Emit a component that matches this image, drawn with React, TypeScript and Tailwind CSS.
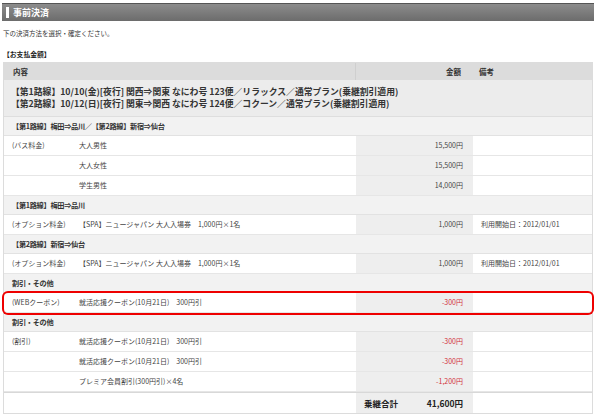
import React from "react";

const FONT = { fontFamily: '"Noto Sans CJK JP", "Noto Sans", sans-serif' };

type Row =
  | { kind: "section"; label: string }
  | { kind: "item"; cat?: string; name: string; price: string; red?: boolean; note?: string; mark?: boolean };

const ROWS: Row[] = [
  { kind: "section", label: "【第1路線】梅田⇒品川／【第2路線】新宿⇒仙台" },
  { kind: "item", cat: "(バス料金)", name: "大人男性", price: "15,500円" },
  { kind: "item", name: "大人女性", price: "15,500円" },
  { kind: "item", name: "学生男性", price: "14,000円" },
  { kind: "section", label: "【第1路線】梅田⇒品川" },
  { kind: "item", cat: "(オプション料金)", name: "【SPA】ニュージャパン 大人入場券　1,000円×1名", price: "1,000円", note: "利用開始日：2012/01/01" },
  { kind: "section", label: "【第2路線】新宿⇒仙台" },
  { kind: "item", cat: "(オプション料金)", name: "【SPA】ニュージャパン 大人入場券　1,000円×1名", price: "1,000円", note: "利用開始日：2012/01/01" },
  { kind: "section", label: "割引・その他" },
  { kind: "item", cat: "(WEBクーポン)", name: "就活応援クーポン(10月21日)　300円引", price: "-300円", red: true, mark: true },
  { kind: "section", label: "割引・その他" },
  { kind: "item", cat: "(割引)", name: "就活応援クーポン(10月21日)　300円引", price: "-300円", red: true },
  { kind: "item", name: "就活応援クーポン(10月21日)　300円引", price: "-300円", red: true },
  { kind: "item", name: "プレミア会員割引(300円引)×4名", price: "-1,200円", red: true },
];

function SectionRow({ label }: { label: string }) {
  return (
    <div className="h-[19px] flex items-center bg-[#f2f2f2] border-b border-[#e2e2e2] pl-[8px] text-[7.2px] tracking-[-0.3px] font-bold text-[#333]">
      {label}
    </div>
  );
}

function ItemRow({ row }: { row: Extract<Row, { kind: "item" }> }) {
  return (
    <div
      className={`h-[20px] flex text-[7px] text-[#444] border-b border-[#e6e6e6] bg-white ${
        row.mark ? "relative z-10 rounded-[4px] ring-2 ring-[#ee0000]" : ""
      }`}
    >
      <div className="w-[352px] flex items-center">
        <span className="w-[75px] pl-[8px]">{row.cat}</span>
        <span>{row.name}</span>
      </div>
      <div className={`w-[117px] flex items-center justify-end pr-[10px] bg-[#eeeeee] ${row.red ? "text-[#d2323c]" : ""}`}>
        {row.price}
      </div>
      <div className="flex-1 flex items-center pl-[8px]">{row.note}</div>
    </div>
  );
}

export default function App() {
  return (
    <div className="w-[596px] h-[420px] bg-white overflow-hidden" style={FONT}>
      <div className="pt-[3px] px-[2px]">
        <div className="h-[18px] flex items-center bg-gradient-to-b from-[#8c8c8c] to-[#6c6c6c] border-t border-[#555]">
          <span className="ml-[4px] w-[3px] h-[11px] bg-white" />
          <span className="ml-[4px] text-[9px] font-bold text-white">事前決済</span>
        </div>
      </div>

      <div className="px-[3px] mt-[8px] text-[6.5px] text-[#333]">下の決済方法を選択・確定ください。</div>
      <div className="px-[3px] mt-[10px] text-[6.8px] font-bold text-[#222]">【お支払金額】</div>

      <div className="ml-[3px] mr-[3px] mt-[3px] border border-[#dcdcdc]">
        <div className="h-[17px] flex items-center bg-[#dcdcdc] text-[7.5px] font-bold text-[#333]">
          <div className="w-[352px] pl-[9px] border-r border-[#cfcfcf] h-full flex items-center">内容</div>
          <div className="w-[117px] flex justify-end pr-[12px]">金額</div>
          <div className="flex-1 pl-[6px]">備考</div>
        </div>
        <div className="h-[37px] flex flex-col justify-center gap-[3px] bg-[#ececec] border-b border-[#dedede] pl-[7px] text-[8.8px] font-bold text-[#333] leading-[1.1]">
          <div>【第1路線】10/10(金)[夜行] 関西⇒関東 なにわ号 123便／リラックス／通常プラン(乗継割引適用)</div>
          <div>【第2路線】10/12(日)[夜行] 関東⇒関西 なにわ号 124便／コクーン／通常プラン(乗継割引適用)</div>
        </div>

        {ROWS.map((r, i) =>
          r.kind === "section" ? <SectionRow key={i} label={r.label} /> : <ItemRow key={i} row={r} />
        )}

        <div className="h-[21px] flex bg-white border-t border-[#d8d8d8]">
          <div className="w-[352px]" />
          <div className="w-[117px] flex items-center justify-between pl-[8px] pr-[10px] bg-[#eeeeee] text-[8.5px] font-bold text-[#222]">
            <span>乗継合計</span>
            <span>41,600円</span>
          </div>
          <div className="flex-1" />
        </div>
      </div>
    </div>
  );
}
